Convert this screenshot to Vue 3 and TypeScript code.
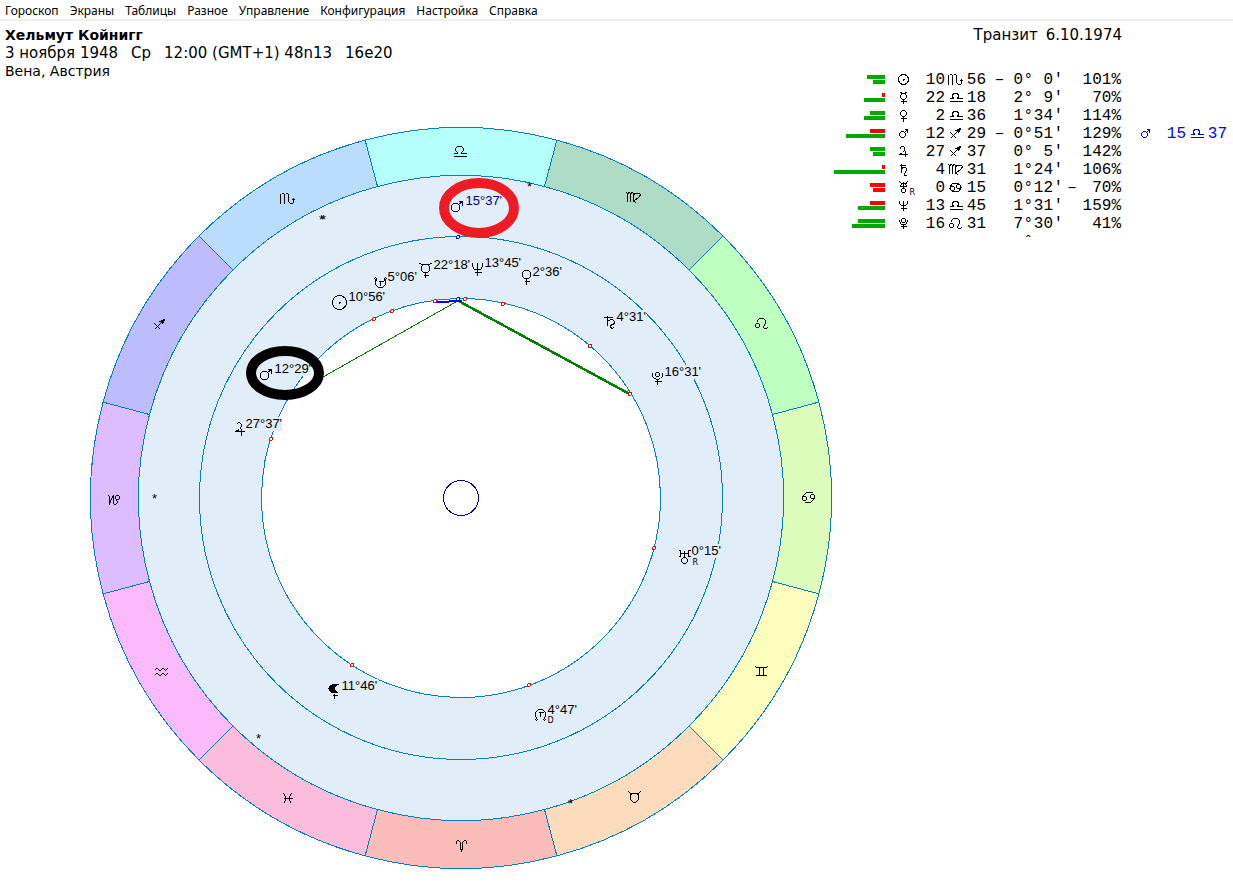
<script setup lang="ts">
type Row = {
  planet: string
  bars: [string, number][]
  deg: string
  sign: string
  min: string
  dir?: string
  spDeg: string
  spMin: string
  forceSign?: string
  force: string
  retro?: boolean
  transit?: { planet: string; deg: string; sign: string; min: string }
}

const menu: string[] = [
  'Гороскоп', 'Экраны', 'Таблицы', 'Разное',
  'Управление', 'Конфигурация', 'Настройка', 'Справка',
]

// The wheel is centred between two pixels, so its radii end in a half
const cx = 460.5
const cy = 497.5
const rOuter = 370.5
const rInner = 322.5

// Large circle made of two arcs, for use inside a glyph path
const ring = (x: number, y: number, r: number): string =>
  `M${x - r} ${y}a${r} ${r} 0 1 1 ${2 * r} 0a${r} ${r} 0 1 1 ${-2 * r} 0`

// Small circle as an octagon: it keeps its shape without smoothing
const oct = (x: number, y: number, r: number): string => {
  const c = r > 2 ? 2 : 1
  const s = 2 * (r - c)
  return `M${x - r} ${y - r + c}l${c} ${-c}h${s}l${c} ${c}v${s}l${-c} ${c}h${-s}l${-c} ${-c}z`
}

const signs: Record<string, string> = {
  libra: 'M-6 5H7M-6 2H-2V1L-4-1V-3L-2-5H2L4-3V-1L2 1V2H7',
  scorpio: 'M-7-5V5M-6-5H-4L-3-4V5M-2-5H0L1-4V3L3 5H5L6 4V0M4 2L6 0L8 2',
  sagittarius: 'M-5 5L5-5M-5-1L1 5M0-3L5-5L3 0M1-3L5-5L3-1Z',
  capricorn: 'M-6-4H-5L-4-3V5L-2-1L0-4V4M1-2H2M3 1L4 2V3L2 5H0' + oct(4, -2, 2),
  aquarius: 'M-6-2L-4-4H-3L-1-2H0L2-4H3L5-2L7-4M-6 3L-4 1H-3L-1 3H0L2 1H3L5 3L7 1',
  pisces: 'M-4-5L-2-2V2L-4 5M4-5L2-2V2L4 5M-4 0H5',
  aries: 'M-5-2V-4L-4-5H-3L-1-3V3L0 5L1 3V-3L3-5H4L5-4V-2',
  taurus: 'M-6-6L-4-4H4L6-6M-3-4L-4-2V2L-1 5H1L4 2V-2L3-4',
  gemini: 'M-6-5L-5-4H5L6-5M-6 5L-5 4H5L6 5M-2-4V4M2-4V4',
  cancer: 'M-6 0L-5-2L-2-5H4M6 0L5 2L2 5H-4' + oct(-4, 1, 2) + oct(4, -1, 2),
  leo: 'M-3-1L-4-2V-3L-2-5H2L4-3V0L2 3V4L3 5H5L6 4' + oct(-4, 2, 2),
  virgo: 'M-7-5L-6-4V4M-6-4L-4-5L-3-4V4M-3-4L-1-5L0-4V3L3 6M0-3L2-4H6L7-3L6-1L0 4',
  libraLow: 'M-6 4H7M-6 1H-2L-3-1V-2L-2-4H2L3-2V-1L2 1H7',
  cancerLow: 'M-6 0L-3-4H3L6-1M6 0L3 4H-3L-6 1' + oct(-3, 1, 2) + oct(3, -1, 2),
}

const tableGlyphs: Record<string, string> = {
  sun: ring(0, 0, 5) + 'M-1 0H1M0-1V1',
  mercury: oct(0, -1, 3) + 'M-3-6V-5L-1-4H1L3-5V-6M0 2V6M-3 4H3',
  venus: oct(0, -2, 3) + 'M0 1V6M-3 3H3',
  mars: oct(-1, 1, 3) + 'M1-1L4-4M1-4H4V-1',
  jupiter: 'M-3-3V-4L-2-5H0L1-4V-1L-1 1L-4 3H4M2-1V5',
  saturn: 'M-2-6V3M-4-4H2M-2-1L0-2H2L3-1V1L1 4V6H3',
  uranus: oct(0, 3, 2) + 'M-4-6L-2-4L-3-1H3L2-4L4-6M0-6V1M-3-4H3',
  neptune: 'M-4-5V-2L-2 0H2L4-2V-5M0-5V5M-3 3H3',
  pluto: oct(0, -3, 2) + 'M-4-4V-2L-2 1H2L4-2V-4M0 1V5M-3 3H3',
}

const chartGlyphs: Record<string, string> = {
  sun: ring(0, 0, 7) + 'M-1 0H1M0-1V1',
  mercury: oct(0, 0, 4) + 'M-6-6V-5L-3-4H3L6-5V-6M0 4V9M-2 7H3',
  venus: oct(0, 0, 4) + 'M0 4V10M-2 7H3',
  mars: oct(0, 0, 4) + 'M3-3L7-6M3-6H7V-2',
  jupiter: 'M-3-4L-1-6H0L2-4V-2L0 1L-4 3H5M2 0V7',
  saturn: 'M-2-6V4M-6-4H3M-2 0L1-2H3L5 0V2L1 4V6L3 7L4 6',
  uranus: oct(0, 4, 3) + 'M-6-6H-4V0H-6M6-6H4V0H6M-4-3H4M0-6V1',
  neptune: 'M-6-4L-5-5V-2L-3 1H3L5-2V-5L6-4M0-6V7M-3 4H4',
  pluto: oct(0, -3, 2) + 'M-5-5V-1L-3 1L0 2L3 1L5-1V-5M0 2V7M-3 4H4',
  southNode: oct(-5, -4, 1) + oct(5, -4, 1) + 'M-4-3L-5-1V2L-2 5H2L5 2V-1L4-3M-2-1H3M0-1V3',
  northNode: oct(-4, 5, 1) + oct(4, 5, 1) + 'M-3 4L-5 2V-2L-2-5H2L5-2V2L3 4M-2-2H3M0-2V2',
  lilith: 'M0 3V8M-2 5H3',
}

const sectorList: { name: string; fill: string; x: number; y: number }[] = [
  { name: 'libra', fill: '#b5fffd', x: 459, y: 151 },
  { name: 'virgo', fill: '#addbc6', x: 633, y: 197 },
  { name: 'leo', fill: '#bfffbf', x: 761, y: 323 },
  { name: 'cancer', fill: '#dcfdbc', x: 808, y: 497 },
  { name: 'gemini', fill: '#fdfdbe', x: 761, y: 671 },
  { name: 'taurus', fill: '#fddbbd', x: 634, y: 797 },
  { name: 'aries', fill: '#fbbdba', x: 461, y: 845 },
  { name: 'pisces', fill: '#fcbddd', x: 287, y: 798 },
  { name: 'aquarius', fill: '#fbbafb', x: 160, y: 672 },
  { name: 'capricorn', fill: '#ddbdff', x: 113, y: 499 },
  { name: 'sagittarius', fill: '#bdbdfe', x: 159, y: 324 },
  { name: 'scorpio', fill: '#bbddfd', x: 287, y: 198 },
]

const polar = (r: number, deg: number): string => {
  const a = (deg * Math.PI) / 180
  return `${(cx + r * Math.sin(a)).toFixed(2)} ${(cy - r * Math.cos(a)).toFixed(2)}`
}

const sectors = sectorList.map((s, i) => {
  const a = i * 30 - 15
  const b = a + 30
  return {
    ...s,
    d: `M${polar(rInner, a)}L${polar(rOuter, a)}A${rOuter} ${rOuter} 0 0 1 ${polar(rOuter, b)}L${polar(rInner, b)}A${rInner} ${rInner} 0 0 0 ${polar(rInner, a)}Z`,
  }
})

const points: { glyph: string; gx: number; gy: number; label: string; x: number; y: number; outer?: boolean }[] = [
  { glyph: 'mars', gx: 455, gy: 207, label: "15°37'", x: 465, y: 204, outer: true },
  { glyph: 'southNode', gx: 380, gy: 282, label: "5°06'", x: 387, y: 280 },
  { glyph: 'sun', gx: 339, gy: 302, label: "10°56'", x: 348, y: 300 },
  { glyph: 'mercury', gx: 425, gy: 268, label: "22°18'", x: 433, y: 268 },
  { glyph: 'neptune', gx: 477, gy: 268, label: "13°45'", x: 484, y: 266 },
  { glyph: 'venus', gx: 526, gy: 274, label: "2°36'", x: 532, y: 275 },
  { glyph: 'saturn', gx: 609, gy: 321, label: "4°31'", x: 616, y: 320 },
  { glyph: 'pluto', gx: 657, gy: 377, label: "16°31'", x: 664, y: 375 },
  { glyph: 'uranus', gx: 684, gy: 556, label: "0°15'", x: 691, y: 554 },
  { glyph: 'northNode', gx: 540, gy: 714, label: "4°47'", x: 547, y: 713 },
  { glyph: 'lilith', gx: 334, gy: 690, label: "11°46'", x: 341, y: 689 },
  { glyph: 'jupiter', gx: 239, gy: 428, label: "27°37'", x: 245, y: 427 },
  { glyph: 'mars', gx: 264, gy: 375, label: "12°29'", x: 274, y: 372 },
]

const dots: [number, number][] = [
  [435, 301], [465, 299], [392, 311], [503, 304], [374, 319], [271, 439],
  [590, 346], [630, 394], [654, 548], [352, 665], [529, 685], [293, 391],
]
const transitDots: [number, number][] = [[458, 237], [458, 299]]
const stars: [number, number][] = [[529, 184], [321, 217], [323, 217], [154, 496], [258, 736], [570, 801]]

const rows: Row[] = [
  { planet: 'sun', bars: [['good', 18], ['good', 12]], deg: '10', sign: 'scorpio', min: '56', dir: '–', spDeg: '0', spMin: '0', force: '101%' },
  { planet: 'mercury', bars: [['bad', 3], ['good', 21]], deg: '22', sign: 'libraLow', min: '18', spDeg: '2', spMin: '9', force: '70%' },
  { planet: 'venus', bars: [['good', 15], ['good', 21]], deg: '2', sign: 'libraLow', min: '36', spDeg: '1', spMin: '34', force: '114%' },
  { planet: 'mars', bars: [['bad', 15], ['good', 39]], deg: '12', sign: 'sagittarius', min: '29', dir: '–', spDeg: '0', spMin: '51', force: '129%', transit: { planet: 'mars', deg: '15', sign: 'libraLow', min: '37' } },
  { planet: 'jupiter', bars: [['good', 15], ['good', 12]], deg: '27', sign: 'sagittarius', min: '37', spDeg: '0', spMin: '5', force: '142%' },
  { planet: 'saturn', bars: [['bad', 3], ['good', 51]], deg: '4', sign: 'virgo', min: '31', spDeg: '1', spMin: '24', force: '106%' },
  { planet: 'uranus', bars: [['bad', 15], ['bad', 12]], deg: '0', sign: 'cancerLow', min: '15', spDeg: '0', spMin: '12', forceSign: '–', force: '70%', retro: true },
  { planet: 'neptune', bars: [['bad', 15], ['good', 27]], deg: '13', sign: 'libraLow', min: '45', spDeg: '1', spMin: '31', force: '159%' },
  { planet: 'pluto', bars: [['good', 27], ['good', 33]], deg: '16', sign: 'leo', min: '31', spDeg: '7', spMin: '30', force: '41%' },
]
</script>

<template>
  <div class="window">
    <nav class="menu">
      <button v-for="item in menu" :key="item" type="button">{{ item }}</button>
    </nav>

    <main class="content">
      <section class="radix">
        <header class="person">
          <h1>Хельмут Койнигг</h1>
          <p class="birth">
            <span>3 ноября 1948</span>
            <span>Ср</span>
            <span>12:00 (GMT+1) 48n13</span>
            <span>16e20</span>
          </p>
          <p>Вена, Австрия</p>
        </header>

        <svg class="wheel" viewBox="89.5 125.5 743 744">
          <circle class="zone" :cx="cx" :cy="cy" :r="rInner" />
          <g v-for="s in sectors" :key="s.name">
            <path class="sector" :d="s.d" :fill="s.fill" />
            <path class="glyph" :class="{ solid: s.name === 'sagittarius' }" :transform="`translate(${s.x} ${s.y})`" :d="signs[s.name]" />
          </g>
          <circle class="orbit" :cx="cx" :cy="cy" r="261.5" />
          <circle class="orbit core" :cx="cx" :cy="cy" r="199.5" />
          <circle class="hub" :cx="cx" :cy="cy" r="17.5" />

          <path class="aspect" d="M458 300L318 379" />
          <path class="aspect strong" d="M459 301L630 394" />
          <path class="conjunction" d="M435 302L462 300" />

          <circle v-for="([x, y], i) in dots" :key="'d' + i" class="dot" :cx="x - 0.5" :cy="y - 0.5" r="1.5" />
          <circle v-for="([x, y], i) in transitDots" :key="'t' + i" class="dot transit" :cx="x - 0.5" :cy="y - 0.5" r="1.5" />
          <text v-for="([x, y], i) in stars" :key="'s' + i" class="star" :x="x" :y="y + 6">*</text>

          <g v-for="p in points" :key="p.label" :class="{ outer: p.outer }">
            <rect class="plate" :x="p.x" :y="p.y - 11" :width="p.label.length * 7 - 6" height="14" />
            <path class="glyph" :transform="`translate(${p.gx} ${p.gy})`" :d="chartGlyphs[p.glyph]" />
            <path v-if="p.glyph === 'lilith'" :transform="`translate(${p.gx} ${p.gy})`" d="M4-6C-1-8-6-5-6-2C-6 2-1 4 4 2C-1 0-1-4 4-6Z" />
            <text class="label" :x="p.x" :y="p.y">{{ p.label }}</text>
          </g>
          <text class="mark" x="692" y="564">R</text>
          <text class="mark" x="547" y="722">D</text>

          <ellipse class="ringmark red" cx="478.5" cy="207.5" rx="35" ry="25" />
          <ellipse class="ringmark" cx="284.5" cy="372.5" rx="34" ry="22" />
        </svg>
      </section>

      <section class="transits">
        <h2><span>Транзит</span> <span>6.10.1974</span></h2>
        <table>
          <colgroup>
            <col class="w-bars"><col class="w-planet"><col class="w-deg"><col class="w-sign"><col class="w-num">
            <col class="w-dir"><col class="w-char"><col class="w-char"><col class="w-num"><col class="w-char">
            <col class="w-minus"><col class="w-force"><col class="w-tplanet"><col class="w-num"><col class="w-sign"><col class="w-num">
          </colgroup>
          <tbody>
            <tr v-for="r in rows" :key="r.planet">
              <td>
                <div class="bars">
                  <i v-for="(b, i) in r.bars" :key="i" :class="b[0]" :style="{ width: b[1] + 'px' }"></i>
                </div>
              </td>
              <td class="icon">
                <svg viewBox="-8.5 -8.5 17 17"><path class="glyph" :d="tableGlyphs[r.planet]" /></svg>
                <sub v-if="r.retro">R</sub>
              </td>
              <td>{{ r.deg }}</td>
              <td class="icon">
                <svg viewBox="-8.5 -8.5 17 17"><path class="glyph" :class="{ solid: r.sign === 'sagittarius' }" :d="signs[r.sign]" /></svg>
              </td>
              <td>{{ r.min }}</td>
              <td class="mid">{{ r.dir }}</td>
              <td>{{ r.spDeg }}</td>
              <td>°</td>
              <td>{{ r.spMin }}</td>
              <td>'</td>
              <td class="mid">{{ r.forceSign }}</td>
              <td>{{ r.force }}</td>
              <template v-if="r.transit">
                <td class="icon blue lead"><svg viewBox="-8.5 -8.5 17 17"><path class="glyph" :d="tableGlyphs[r.transit.planet]" /></svg></td>
                <td class="blue">{{ r.transit.deg }}</td>
                <td class="icon blue"><svg viewBox="-8.5 -8.5 17 17"><path class="glyph" :d="signs[r.transit.sign]" /></svg></td>
                <td class="blue">{{ r.transit.min }}</td>
              </template>
            </tr>
            <tr>
              <td colspan="7"></td>
              <td><div class="cut">°</div></td>
            </tr>
          </tbody>
        </table>
      </section>
    </main>
  </div>
</template>

<style>
body {
  margin: 0;
  background: #fff;
}
</style>

<style scoped>
.window {
  color: #000;
  font-family: "DejaVu Sans", sans-serif;
}
.menu {
  display: flex;
  gap: 11px;
  height: 19px;
  padding: 0 5px;
  border-bottom: 2px solid #f0f0f0;
}
.menu button {
  padding: 2px 0 0;
  border: 0;
  background: none;
  color: #000;
  font: 12px/18px "Noto Sans", "Open Sans", sans-serif;
}
.content {
  display: grid;
  grid-template-columns: 1fr 395px;
  padding: 5px 6px 0 0;
}
.radix {
  min-width: 0;
}
.person {
  padding-left: 5px;
}
.person h1,
.person p,
.transits h2 {
  margin: 0;
  font-size: 14px;
  line-height: 18px;
  font-weight: 400;
}
.person h1 {
  font-weight: 700;
}
.person .birth,
.transits h2 {
  display: flex;
  gap: 13px;
  font-size: 15px;
}
.wheel {
  display: block;
  width: 743px;
  height: 744px;
  margin: 46px 0 0 90px;
  shape-rendering: crispEdges;
}
.zone {
  fill: #e1edf9;
}
.sector,
.orbit {
  stroke: #0080c0;
  stroke-width: 1;
}
.orbit {
  fill: none;
}
.core {
  fill: #fff;
}
.hub {
  fill: none;
  stroke: #000080;
}
.aspect {
  fill: none;
  stroke: #008000;
}
.strong {
  stroke-width: 2.5;
}
.conjunction {
  stroke: #00f;
  stroke-width: 2;
}
.dot {
  fill: #fff;
  stroke: #f00;
}
.dot.transit {
  stroke: #00f;
}
.glyph {
  fill: none;
  stroke: currentColor;
  stroke-width: 1;
}
.glyph.solid {
  stroke-linejoin: bevel;
}
.plate {
  fill: #e1edf9;
}
.outer {
  color: #000080;
}
.label {
  fill: currentColor;
  font: 13px "Liberation Sans", Arial, sans-serif;
}
.star {
  font: 13px "Liberation Sans", Arial, sans-serif;
  text-anchor: middle;
}
.mark {
  font: 8px "DejaVu Sans", sans-serif;
}
.ringmark {
  fill: none;
  stroke: #000;
  stroke-width: 10;
  shape-rendering: auto;
}
.red {
  stroke: #ed1c24;
}
.transits h2 {
  gap: 8px;
  justify-content: flex-end;
  padding-right: 105px;
}
.transits table {
  width: 395px;
  margin-top: 27px;
  border-collapse: collapse;
  table-layout: fixed;
  font: 16px/18px "Liberation Mono", "Courier New", monospace;
}
.transits td {
  height: 18px;
  padding: 0;
  text-align: right;
  vertical-align: top;
  white-space: nowrap;
}
.transits .mid {
  text-align: center;
}
.transits .blue {
  color: #00f;
}
.icon {
  position: relative;
}
.icon svg {
  display: block;
  width: 17px;
  height: 17px;
  margin: 0 auto;
  shape-rendering: crispEdges;
}
.transits .lead {
  padding-left: 4px;
}
.icon sub {
  position: absolute;
  right: 7px;
  bottom: 0;
  font: 8px/8px "DejaVu Sans", sans-serif;
}
.bars {
  display: flex;
  flex-direction: column;
  align-items: flex-end;
  gap: 1px;
  padding-top: 4px;
}
.bars i {
  height: 4px;
}
.good {
  background: #00a800;
}
.bad {
  background: #f00;
}
.cut {
  height: 4px;
  overflow: hidden;
}
.w-bars { width: 53px; }
.w-planet { width: 37px; }
.w-deg { width: 23px; }
.w-sign { width: 21px; }
.w-num { width: 20px; }
.w-dir { width: 27px; }
.w-char { width: 10px; }
.w-minus { width: 18px; }
.w-force { width: 40px; }
.w-tplanet { width: 45px; }
</style>
